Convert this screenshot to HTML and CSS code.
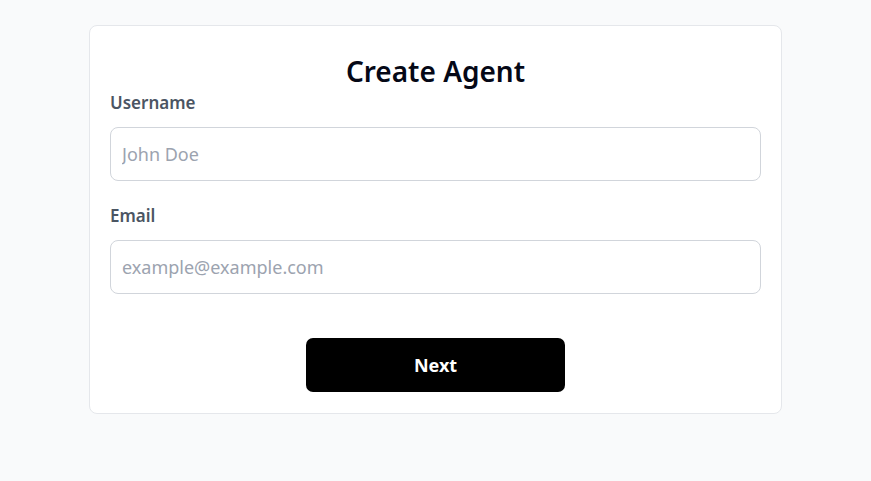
FILE: index.html
```html
<!DOCTYPE html>
<html lang="en">
<head>
<meta charset="utf-8">
<title>Create Agent</title>
<link rel="stylesheet" href="styles.css">
</head>
<body>
<main class="page">
  <form class="card">
    <h1 class="title">Create Agent</h1>
    <div class="field">
      <label class="label" for="username">Username</label>
      <input class="input" id="username" type="text" placeholder="John Doe">
    </div>
    <div class="field">
      <label class="label" for="email">Email</label>
      <input class="input" id="email" type="email" placeholder="example@example.com">
    </div>
    <div class="actions">
      <button class="btn" type="button">Next</button>
    </div>
  </form>
</main>
</body>
</html>
```
FILE: styles.css
```css
* { box-sizing: border-box; }
html, body {
  margin: 0;
  padding: 0;
  background: #f9fafb;
  font-family: "Noto Sans", "Open Sans", sans-serif;
}
.page {
  padding: 25px 89px 0 89px;
}
.card {
  width: 693px;
  background: #ffffff;
  border: 1px solid #e5e7eb;
  border-radius: 8px;
  padding: 26px 20px 21px 20px;
  display: flex;
  flex-direction: column;
}
.title {
  margin: 0;
  text-align: center;
  font-size: 28px;
  line-height: 39px;
  font-weight: 600;
  color: #050816;
}
.field {
  display: flex;
  flex-direction: column;
  margin-bottom: 23px;
}
.label {
  font-size: 17px;
  line-height: 24px;
  font-weight: 600;
  color: #4b5563;
  margin-bottom: 12px;
}
.input {
  height: 54px;
  border: 1px solid #d1d5db;
  border-radius: 8px;
  padding: 0 11px;
  font-family: inherit;
  font-size: 18px;
  color: #111827;
  outline: none;
}
.input::placeholder { color: #9ca3af; }
.actions {
  display: flex;
  justify-content: center;
  margin-top: 21px;
}
.btn {
  width: 259px;
  height: 54px;
  background: #000000;
  color: #ffffff;
  border: none;
  border-radius: 7px;
  font-family: inherit;
  font-size: 18px;
  font-weight: 700;
}
```
